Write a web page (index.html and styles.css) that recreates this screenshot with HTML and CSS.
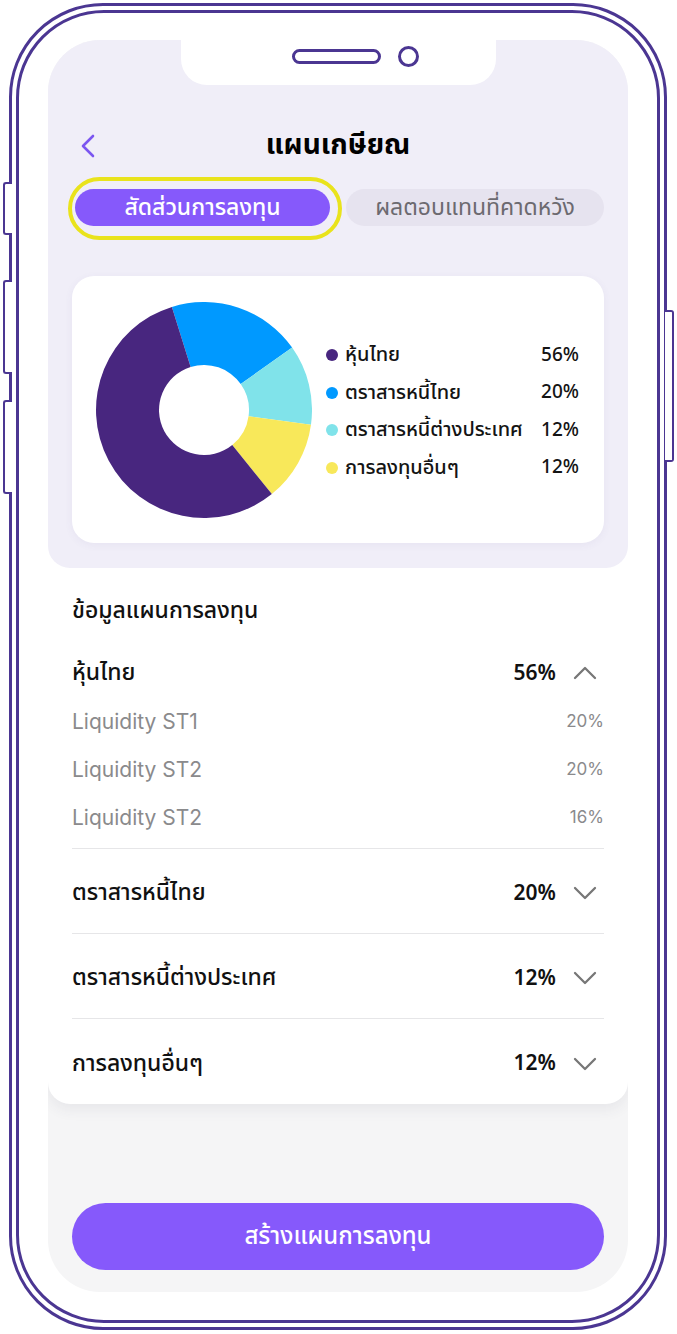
FILE: index.html
```html
<!DOCTYPE html>
<html lang="th">
<head>
<meta charset="utf-8">
<title>แผนเกษียณ</title>
<link rel="stylesheet" href="styles.css">
</head>
<body>
<div class="phone">
  <span class="side-btn side-l1"></span>
  <span class="side-btn side-l2"></span>
  <span class="side-btn side-l3"></span>
  <span class="side-btn side-r1"></span>
  <div class="phone-inner">
    <div class="screen">
      <section class="top">
        <div class="notch-row">
          <div class="notch">
            <span class="speaker"></span>
            <span class="camera"></span>
          </div>
        </div>
        <header class="header">
          <button class="back" aria-label="back">
            <svg width="14" height="24" viewBox="0 0 14 24"><polyline points="12,2 2,12 12,22" fill="none" stroke="#7B56F0" stroke-width="2.6" stroke-linecap="round" stroke-linejoin="round"/></svg>
          </button>
          <h1 class="title">แผนเกษียณ</h1>
          <span></span>
        </header>
        <div class="tabs">
          <div class="tab tab-active">สัดส่วนการลงทุน<span class="highlight"></span></div>
          <div class="tab tab-idle">ผลตอบแทนที่คาดหวัง</div>
        </div>
        <div class="chart-card">
          <svg class="donut" width="216" height="216" viewBox="0 0 216 216">
            <path fill="#0099FF" d="M75.88 4.88 A108 108 0 0 1 196.14 45.59 L144.72 81.99 A45 45 0 0 0 94.62 65.03 Z"/>
            <path fill="#80E3EA" d="M196.14 45.59 A108 108 0 0 1 214.97 122.84 L152.57 114.18 A45 45 0 0 0 144.72 81.99 Z"/>
            <path fill="#F8E85A" d="M214.97 122.84 A108 108 0 0 1 175.82 192.05 L136.26 143.02 A45 45 0 0 0 152.57 114.18 Z"/>
            <path fill="#48267F" d="M175.82 192.05 A108 108 0 1 1 75.88 4.88 L94.62 65.03 A45 45 0 1 0 136.26 143.02 Z"/>
          </svg>
          <ul class="legend">
            <li><span class="dot dot-purple"></span><span class="lg-name">หุ้นไทย</span><span class="lg-pct">56%</span></li>
            <li><span class="dot dot-blue"></span><span class="lg-name">ตราสารหนี้ไทย</span><span class="lg-pct">20%</span></li>
            <li><span class="dot dot-cyan"></span><span class="lg-name">ตราสารหนี้ต่างประเทศ</span><span class="lg-pct">12%</span></li>
            <li><span class="dot dot-yellow"></span><span class="lg-name">การลงทุนอื่นๆ</span><span class="lg-pct">12%</span></li>
          </ul>
        </div>
      </section>

      <section class="info">
        <h2 class="info-title">ข้อมูลแผนการลงทุน</h2>
        <div class="item item-open">
          <div class="item-head">
            <span class="item-name">หุ้นไทย</span>
            <span class="item-pct">56%</span>
            <svg class="chev" width="24" height="14" viewBox="0 0 24 14"><polyline points="2,12 12,2 22,12" fill="none" stroke="#777" stroke-width="2.3" stroke-linecap="round" stroke-linejoin="round"/></svg>
          </div>
          <div class="sub"><span>Liquidity ST1</span><span class="sub-pct">20%</span></div>
          <div class="sub"><span>Liquidity ST2</span><span class="sub-pct">20%</span></div>
          <div class="sub"><span>Liquidity ST2</span><span class="sub-pct">16%</span></div>
        </div>
        <div class="item">
          <div class="item-head">
            <span class="item-name">ตราสารหนี้ไทย</span>
            <span class="item-pct">20%</span>
            <svg class="chev" width="24" height="14" viewBox="0 0 24 14"><polyline points="2,2 12,12 22,2" fill="none" stroke="#777" stroke-width="2.3" stroke-linecap="round" stroke-linejoin="round"/></svg>
          </div>
        </div>
        <div class="item">
          <div class="item-head">
            <span class="item-name">ตราสารหนี้ต่างประเทศ</span>
            <span class="item-pct">12%</span>
            <svg class="chev" width="24" height="14" viewBox="0 0 24 14"><polyline points="2,2 12,12 22,2" fill="none" stroke="#777" stroke-width="2.3" stroke-linecap="round" stroke-linejoin="round"/></svg>
          </div>
        </div>
        <div class="item">
          <div class="item-head">
            <span class="item-name">การลงทุนอื่นๆ</span>
            <span class="item-pct">12%</span>
            <svg class="chev" width="24" height="14" viewBox="0 0 24 14"><polyline points="2,2 12,12 22,2" fill="none" stroke="#777" stroke-width="2.3" stroke-linecap="round" stroke-linejoin="round"/></svg>
          </div>
        </div>
      </section>

      <footer class="bottom">
        <button class="cta">สร้างแผนการลงทุน</button>
      </footer>
    </div>
  </div>
</div>
</body>
</html>
```

FILE: styles.css
```css
* { box-sizing: border-box; }
html, body { margin: 0; padding: 0; }
body {
  width: 677px;
  height: 1334px;
  background: #ffffff;
  font-family: "Noto Sans Thai", "Noto Sans Thai UI", "Noto Sans", "Open Sans", sans-serif;
  color: #111;
  overflow: hidden;
}
.phone {
  position: relative;
  margin: 3px 0 0 9px;
  width: 658px;
  height: 1327px;
  border: 3px solid #4B3692;
  border-radius: 94px;
  padding: 4px;
  background: #fff;
}
.phone-inner {
  width: 100%;
  height: 100%;
  border: 3px solid #4B3692;
  border-radius: 88px;
  padding: 27px 29px 28px 29px;
}
.side-btn {
  position: absolute;
  width: 9px;
  border: 2px solid #4B3692;
  background: #fff;
  border-radius: 3px;
}
.side-l1 { left: -9px; top: 176px; height: 53px; border-right: none; border-radius: 3px 0 0 3px; }
.side-l2 { left: -9px; top: 274px; height: 94px; border-right: none; border-radius: 3px 0 0 3px; }
.side-l3 { left: -9px; top: 394px; height: 94px; border-right: none; border-radius: 3px 0 0 3px; }
.side-r1 { right: -10px; top: 304px; height: 152px; border-left: none; border-radius: 0 3px 3px 0; }

.screen {
  width: 580px;
  height: 1252px;
  border-radius: 52px;
  overflow: hidden;
  background: #F5F5F6;
  display: flex;
  flex-direction: column;
}
.top {
  position: relative;
  z-index: 2;
  background: #F0EEF8;
  border-radius: 0 0 22px 22px;
  padding: 0 24px 25px;
}
.notch-row {
  height: 45px;
  display: flex;
  justify-content: center;
}
.notch {
  width: 315px;
  height: 45px;
  background: #fff;
  border-radius: 0 0 26px 26px;
  display: flex;
  align-items: flex-start;
  justify-content: center;
  gap: 17px;
  padding: 6px 0 0 34px;
}
.speaker {
  display: block;
  width: 89px;
  height: 15px;
  margin-top: 3px;
  border: 3px solid #4B3692;
  border-radius: 8px;
}
.camera {
  display: block;
  width: 21px;
  height: 21px;
  border: 3px solid #4B3692;
  border-radius: 50%;
}
.header {
  margin-top: 39px;
  height: 44px;
  display: grid;
  grid-template-columns: 1fr auto 1fr;
  align-items: center;
}
.back {
  justify-self: start;
  margin-left: 9px;
  padding: 0;
  border: 0;
  background: none;
  display: flex;
}
.title {
  margin: 0;
  font-size: 28px;
  font-weight: 700;
  line-height: 44px;
  color: #000;
}
.tabs {
  margin-top: 21px;
  height: 37px;
  display: flex;
  gap: 16px;
}
.tab {
  height: 37px;
  border-radius: 19px;
  display: flex;
  align-items: center;
  justify-content: center;
  font-size: 23px;
  font-weight: 500;
  line-height: 1;
  padding-top: 1px;
}
.tab-active {
  position: relative;
  width: 255px;
  margin-left: 3px;
  background: #8659FB;
  color: #fff;
}
.tab-idle {
  flex: 1;
  background: #E6E3EF;
  color: #6c6a70;
  font-weight: 400;
}
.highlight {
  position: absolute;
  left: -7px;
  right: -12px;
  top: -12px;
  bottom: -14px;
  border: 4px solid #E9E31C;
  border-radius: 32px;
}
.chart-card {
  margin-top: 50px;
  height: 267px;
  background: #fff;
  border-radius: 22px;
  box-shadow: 0 2px 8px rgba(80, 70, 130, 0.06);
  display: flex;
  align-items: center;
  padding: 4px 25px 0 24px;
}
.donut { flex: none; display: block; margin-top: -4px; }
.legend {
  list-style: none;
  margin: 0 0 0 14px;
  padding: 0;
  flex: 1;
}
.legend li {
  height: 37.5px;
  display: flex;
  align-items: center;
  font-size: 20px;
  font-weight: 500;
  color: #141414;
}
.dot {
  width: 12px;
  height: 12px;
  border-radius: 50%;
  margin-right: 7px;
  flex: none;
}
.dot-purple { background: #48267F; }
.dot-blue { background: #0099FF; }
.dot-cyan { background: #80E3EA; }
.dot-yellow { background: #F8E85A; }
.lg-name { flex: 1; white-space: nowrap; }
.lg-pct { text-align: right; font-size: 19px; }

.info {
  position: relative;
  z-index: 1;
  margin-top: -22px;
  padding: 22px 24px 0;
  background: #fff;
  border-radius: 0 0 22px 22px;
  box-shadow: 0 6px 14px rgba(60, 60, 90, 0.07);
}
.info-title {
  margin: 28px 0 0;
  font-size: 23px;
  font-weight: 500;
  line-height: 30px;
}
.item + .item { border-top: 1px solid #E6E6E8; }
.item-open { margin-top: 21px; padding-bottom: 7px; }
.item-head {
  height: 84px;
  display: flex;
  align-items: center;
  padding-top: 4px;
}
.item-open .item-head { height: 50px; padding-top: 2px; }
.item:last-child .item-head { height: 85px; }
.item-name {
  flex: 1;
  font-size: 23px;
  font-weight: 500;
  color: #111;
}
.item-pct {
  font-size: 21px;
  font-weight: 600;
  color: #111;
}
.chev { margin: 0 7px 0 17px; flex: none; }
.sub {
  height: 48px;
  display: flex;
  align-items: center;
  justify-content: space-between;
  font-family: "Inter", "Noto Sans", sans-serif;
  font-size: 21px;
  color: #8a8a8c;
}
.sub-pct { font-size: 17px; color: #8a8a8c; }

.bottom {
  flex: 1;
  display: flex;
  flex-direction: column;
  justify-content: flex-end;
  padding: 0 24px 22px;
}
.cta {
  height: 67px;
  width: 100%;
  border: 0;
  border-radius: 34px;
  background: #8659FB;
  color: #fff;
  font-family: inherit;
  font-size: 24px;
  font-weight: 500;
}
```
